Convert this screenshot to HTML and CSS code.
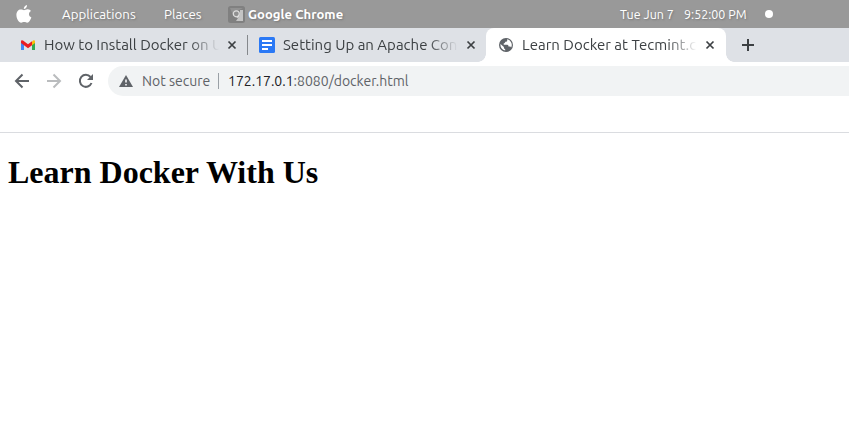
FILE: index.html
```html
<!DOCTYPE html>
<html lang="en">
<head>
<meta charset="utf-8">
<title>Learn Docker at Tecmint.com</title>
<link rel="stylesheet" href="styles.css">
</head>
<body>
<header class="menubar">
  <svg class="apple" viewBox="0 0 16 18"><path d="M11 0C11.2 2 9.700 4.100 7.800 4.100 7.600 2.200 9.200.4 11 0ZM8 5.200C8.900 5.200 10 4.300 11.700 4.300 13.200 4.400 14.300 5.100 14.900 6.100 12.100 7.800 12.400 11.300 15.400 12.500 14.500 15 13 17.700 11.200 17.700 10.100 17.700 9.600 17.100 8.200 17.100 6.800 17.100 6.300 17.700 5.200 17.700 2.800 17.700.4 13.600.4 10 .4 6.500 2.500 4.500 4.800 4.500 6.200 4.500 7.200 5.200 8 5.200Z"/></svg>
  <span class="menu-applications">Applications</span>
  <span class="menu-places">Places</span>
  <svg class="chrome" viewBox="0 0 17 17"><rect width="17" height="17" rx="2.500" fill="#808080"/><path d="M2 2h13L9 5 5 9Z" fill="#929292"/><path d="M12 4h3v11H8l4-6Z" fill="#c4c4c4"/><circle cx="8.300" cy="7.800" r="3" fill="#909090" stroke="#dedede" stroke-width="1.200"/><path d="M11.300 8.500 9.500 12" stroke="#dedede"/></svg>
  <b class="menu-app">Google Chrome</b>
  <span class="date">Tue Jun 7</span>
  <span class="time">9:52:00 PM</span>
  <i class="dot"></i>
</header>
<nav class="tabs">
  <div class="tab">
    <svg class="favicon" viewBox="0 0 16 16"><path d="M1 5v8h3V7Z" fill="#4285f4"/><path d="M12 7v6h3V5Z" fill="#34a853"/><path d="M12 4.500 13 3.600Q15 2.500 15 4.700V6l-3 2.200Z" fill="#fbbc04"/><path d="M1 6V4.700Q1 2.500 3 3.600L8 7.300l4-3v4L8 11.200Z" fill="#ea1c24"/></svg>
    <span class="tab-title">How to Install Docker on U</span>
    <svg class="close" viewBox="0 0 10 10"><path d="m1.500 1.500 7 7m0-7-7 7"/></svg>
  </div>
  <div class="tab divided">
    <svg class="favicon" viewBox="0 0 16 16"><rect width="16" height="16" rx="1.500" fill="#2b79f5"/><path d="M3 4h10M3 8h10M3 12h6" stroke="#fff" stroke-width="2"/></svg>
    <span class="tab-title">Setting Up an Apache Cont</span>
    <svg class="close" viewBox="0 0 10 10"><path d="m1.500 1.500 7 7m0-7-7 7"/></svg>
  </div>
  <div class="tab active">
    <svg class="favicon" viewBox="0 0 16 16"><circle cx="8" cy="8" r="7" fill="#5f6368"/><path d="M9 2.300c.6 2-.2 2.400-1.700 2.500-.3 1.200-.8 1.500-1.600 1.700v1.200h3.600c.8 0 1.200.8 1.200 1.800h1.300c.7 0 1 .5 1.300 1.100A5.700 5.700 0 0 0 9 2.300ZM2.500 7.100a5.700 5.700 0 0 0 4.700 6.500v-1.400c-.8-.2-1.300-.8-1.300-1.700v-.6Z" fill="#fff"/></svg>
    <span class="tab-title">Learn Docker at Tecmint.co</span>
    <svg class="close" viewBox="0 0 10 10"><path d="m1.500 1.500 7 7m0-7-7 7"/></svg>
  </div>
  <svg class="plus" viewBox="0 0 12 12"><path d="M6 0v12M0 6h12"/></svg>
</nav>
<div class="toolbar">
  <svg class="nav-icon" viewBox="0 0 16 16"><path d="M15 8H2m6.500-6.500L2 8l6.500 6.500"/></svg>
  <svg class="nav-icon forward" viewBox="0 0 16 16"><path d="M1 8h13M7.500 1.500 14 8l-6.500 6.500"/></svg>
  <svg class="nav-icon" viewBox="0 0 16 16"><path d="M13.500 10A6 6 0 1 1 12.500 4"/><path class="solid" d="M15 1v6H9Z"/></svg>
  <div class="address">
    <svg class="warning" viewBox="0 0 14 12"><path d="M7 0l7 12H0Z" fill="#5f6368"/><path d="M7 4.500v3M7 9v1.500" stroke="#fff" stroke-width="1.500"/></svg>
    <span class="secure">Not secure</span>
    <span class="url"><span class="host">172.17.0.1</span><span class="path">:8080/docker.html</span></span>
  </div>
</div>
<main class="page"><h1>Learn Docker With Us</h1></main>
</body>
</html>
```
FILE: styles.css
```css
* { box-sizing: border-box; }
body { margin: 0; background: #fff; font-family: Ubuntu, "Noto Sans", sans-serif; white-space: nowrap; overflow: hidden; }
svg { display: block; flex: none; }
.menubar { height: 28px; background: #999; display: flex; align-items: center; color: #fff; font-size: 13.33px; text-shadow: 1px 1px 2px #777; padding-left: 16px; }
.menubar > * { flex: none; }
.apple { width: 16px; height: 18px; fill: #fff; margin-right: 30px; }
.menu-applications { width: 102px; }
.menu-places { width: 64px; }
.chrome { width: 17px; height: 17px; margin-right: 3px; }
.menu-app { width: 372px; font-size: 13.1px; }
.date { width: 64px; font-size: 12.5px; }
.time { width: 81px; font-size: 12.5px; }
.dot { width: 8px; height: 8px; border-radius: 50%; background: #fff; }
.tabs { height: 34px; background: #dee1e6; display: flex; align-items: center; padding-left: 8px; color: #3c4043; }
.tab { position: relative; width: 239px; height: 34px; display: flex; align-items: center; padding-left: 12px; flex: none; }
.divided::before { content: ""; position: absolute; left: 0; top: 7px; width: 1px; height: 20px; background: #85888c; }
.active { width: 240px; background: #fff; border-radius: 8px 8px 0 0; }
.active::before, .active::after { content: ""; position: absolute; bottom: 0; width: 8px; height: 8px; }
.active::before { left: -8px; background: radial-gradient(circle at 0 0, #dee1e6 7.5px, #fff 8px); }
.active::after { right: -8px; background: radial-gradient(circle at 100% 0, #dee1e6 7.5px, #fff 8px); }
.favicon { width: 16px; height: 16px; margin-right: 8px; }
.tab-title { width: 175px; flex: none; overflow: hidden; font-size: 15px; line-height: 22px; -webkit-mask-image: linear-gradient(to right, #000 145px, transparent); mask-image: linear-gradient(to right, #000 145px, transparent); }
.close { width: 10px; height: 10px; margin-left: 8px; fill: none; stroke: #3c4043; stroke-width: 1.7; }
.plus { width: 12px; height: 12px; margin-left: 16px; fill: none; stroke: #3c4043; stroke-width: 2; }
.toolbar { height: 71px; border-bottom: 1px solid #dadce0; display: flex; align-items: flex-start; padding: 4px 0 0 14px; }
.nav-icon { width: 16px; height: 16px; margin: 7px 16px 0 0; fill: none; stroke: #5f6368; stroke-width: 2; }
.nav-icon .solid { fill: #5f6368; stroke: none; }
.forward { stroke: #babcbe; }
.address { flex: 1; height: 30px; margin-left: -2px; border-radius: 15px 0 0 15px; background: #f1f3f4; display: flex; align-items: center; padding-left: 11px; font-size: 14px; color: #5f6368; }
.warning { width: 14px; height: 12px; margin-right: 9px; }
.secure { width: 77px; border-right: 1px solid #9aa0a6; line-height: 16px; margin-right: 9px; }
.host { color: #202124; }
.page { padding: 0 8px; }
.page h1 { margin: 21px 0; font: bold 32px/37px "Liberation Serif", serif; color: #000; }
```
